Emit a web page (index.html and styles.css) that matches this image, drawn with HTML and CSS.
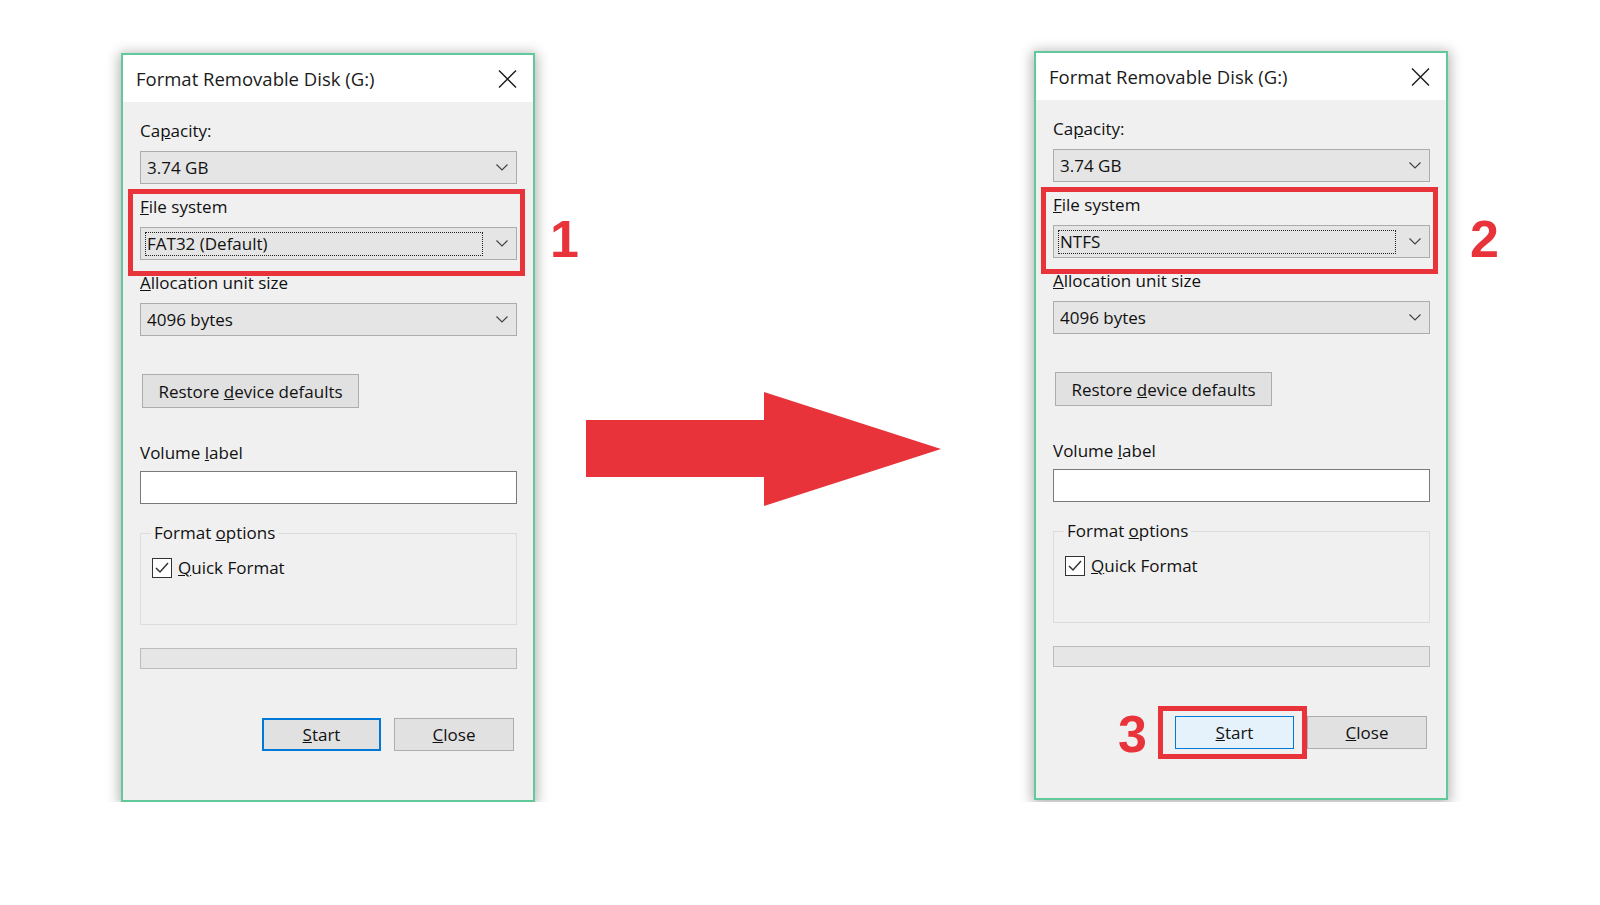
FILE: index.html
```html
<!DOCTYPE html>
<html lang="en">
<head>
    <meta charset="UTF-8">
    <meta name="viewport" content="width=device-width, initial-scale=1.0">
    <title>Format Removable Disk</title>
    <link rel="stylesheet" href="styles.css">
</head>
<body>
    <div class="stage">
        <div class="dialog dialog-before">
            <div class="titlebar">
                <span class="title">Format Removable Disk (G:)</span>
                <svg class="close-x" width="19" height="18" viewBox="0 0 19 18"><path d="M1 0.5 L18 17.5 M18 0.5 L1 17.5" stroke="#1a1a1a" stroke-width="1.4" fill="none"/></svg>
            </div>
            <div class="body">
                <div class="field">
                    <label class="label">Ca<u>p</u>acity:</label>
                    <div class="select"><span class="value">3.74 GB</span><svg class="chev" width="12" height="7" viewBox="0 0 12 7"><polyline points="0.5,0.5 6,6 11.5,0.5" stroke="#444" stroke-width="1.2" fill="none"/></svg></div>
                </div>
                <div class="field">
                    <label class="label"><u>F</u>ile system</label>
                    <div class="select"><span class="value focused">FAT32 (Default)</span><svg class="chev" width="12" height="7" viewBox="0 0 12 7"><polyline points="0.5,0.5 6,6 11.5,0.5" stroke="#444" stroke-width="1.2" fill="none"/></svg></div>
                </div>
                <div class="field">
                    <label class="label"><u>A</u>llocation unit size</label>
                    <div class="select"><span class="value">4096 bytes</span><svg class="chev" width="12" height="7" viewBox="0 0 12 7"><polyline points="0.5,0.5 6,6 11.5,0.5" stroke="#444" stroke-width="1.2" fill="none"/></svg></div>
                </div>

                <div class="btn btn-restore"><span>Restore <u>d</u>evice defaults</span></div>

                <label class="label volume-label">Volume <u>l</u>abel</label>
                <div class="textbox"></div>

                <fieldset class="group">
                    <legend>Format <u>o</u>ptions</legend>
                    <div class="check-row">
                        <span class="checkbox"><svg width="18" height="18" viewBox="0 0 18 18"><polyline points="3,9 7,13 15,4" stroke="#333" stroke-width="1.5" fill="none"/></svg></span>
                        <span><u>Q</u>uick Format</span>
                    </div>
                </fieldset>

                <div class="progress"></div>

                <div class="actions">
                    <div class="btn btn-default"><span><u>S</u>tart</span></div>
                    <div class="btn"><span><u>C</u>lose</span></div>
                </div>
            </div>

            <div class="mark mark-fs"></div>
            <span class="step step-1">1</span>
        </div>

        <svg class="arrow" width="355" height="114" viewBox="0 0 355 114"><path d="M0 28 H178 V0 L355 57 L178 114 V85 H0 Z" fill="#e8333b"/></svg>

        <div class="dialog dialog-after">
            <div class="titlebar">
                <span class="title">Format Removable Disk (G:)</span>
                <svg class="close-x" width="19" height="18" viewBox="0 0 19 18"><path d="M1 0.5 L18 17.5 M18 0.5 L1 17.5" stroke="#1a1a1a" stroke-width="1.4" fill="none"/></svg>
            </div>
            <div class="body">
                <div class="field">
                    <label class="label">Ca<u>p</u>acity:</label>
                    <div class="select"><span class="value">3.74 GB</span><svg class="chev" width="12" height="7" viewBox="0 0 12 7"><polyline points="0.5,0.5 6,6 11.5,0.5" stroke="#444" stroke-width="1.2" fill="none"/></svg></div>
                </div>
                <div class="field">
                    <label class="label"><u>F</u>ile system</label>
                    <div class="select"><span class="value focused">NTFS</span><svg class="chev" width="12" height="7" viewBox="0 0 12 7"><polyline points="0.5,0.5 6,6 11.5,0.5" stroke="#444" stroke-width="1.2" fill="none"/></svg></div>
                </div>
                <div class="field">
                    <label class="label"><u>A</u>llocation unit size</label>
                    <div class="select"><span class="value">4096 bytes</span><svg class="chev" width="12" height="7" viewBox="0 0 12 7"><polyline points="0.5,0.5 6,6 11.5,0.5" stroke="#444" stroke-width="1.2" fill="none"/></svg></div>
                </div>

                <div class="btn btn-restore"><span>Restore <u>d</u>evice defaults</span></div>

                <label class="label volume-label">Volume <u>l</u>abel</label>
                <div class="textbox"></div>

                <fieldset class="group">
                    <legend>Format <u>o</u>ptions</legend>
                    <div class="check-row">
                        <span class="checkbox"><svg width="18" height="18" viewBox="0 0 18 18"><polyline points="3,9 7,13 15,4" stroke="#333" stroke-width="1.5" fill="none"/></svg></span>
                        <span><u>Q</u>uick Format</span>
                    </div>
                </fieldset>

                <div class="progress"></div>

                <div class="actions">
                    <div class="btn btn-hover"><span><u>S</u>tart</span></div>
                    <div class="btn"><span><u>C</u>lose</span></div>
                </div>
            </div>

            <div class="mark mark-fs"></div>
            <div class="mark mark-start"></div>
            <span class="step step-2">2</span>
            <span class="step step-3">3</span>
        </div>
    </div>
</body>
</html>
```

FILE: styles.css
```css
* {
    box-sizing: border-box;
}
body {
    margin: 0;
    background-color: #fff;
    font-family: "Open Sans", "Noto Sans", sans-serif;
    color: #111;
}
.stage {
    display: flex;
    align-items: flex-start;
    padding-left: 121px;
}
.dialog {
    position: relative;
    width: 414px;
    background-color: #f0f0f0;
    border: 2px solid #62c99c;
    box-shadow: 0 2px 12px 2px rgba(0, 0, 0, 0.3);
}
.dialog-before {
    margin-top: 53px;
}
.dialog-after {
    margin-top: 51px;
}
.arrow {
    margin: 392px 93px 0 51px;
    flex-shrink: 0;
}
.titlebar {
    height: 47px;
    background-color: #fff;
    display: flex;
    align-items: center;
    justify-content: space-between;
    padding: 0 16px 0 13px;
}
.title {
    font-size: 18.5px;
    color: #1a1a1a;
}
.body {
    display: flex;
    flex-direction: column;
    padding: 0 16px 49px 17px;
    font-size: 17px;
}
.field {
    margin-top: 12px;
}
.field:first-child {
    margin-top: 18px;
}
.label {
    display: block;
    line-height: 22px;
    margin-bottom: 9px;
}
.select {
    height: 33px;
    display: flex;
    align-items: center;
    padding: 0 8px 0 4px;
    background-color: #e5e5e5;
    border: 1px solid #acacac;
}
.value {
    flex: 1;
    height: 24px;
    line-height: 22px;
    padding: 0 1px;
    border: 1px dotted transparent;
    margin-right: 13px;
}
.value.focused {
    border-color: #222;
}
.btn {
    height: 33px;
    width: 120px;
    display: flex;
    align-items: center;
    justify-content: center;
    background-color: #e1e1e1;
    border: 1px solid #adadad;
}
.btn-restore {
    width: 217px;
    height: 34px;
    margin: 38px 0 0 2px;
}
.btn-default {
    width: 119px;
    border: 2px solid #0078d7;
}
.btn-hover {
    width: 119px;
    background-color: #e5f1fb;
    border-color: #0078d7;
}
.volume-label {
    margin-top: 34px;
    margin-bottom: 7px;
}
.textbox {
    height: 33px;
    background-color: #fff;
    border: 1px solid #7a7a7a;
}
.group {
    margin: 18px 0 0;
    padding: 14px 10px 46px;
    border: 1px solid #dcdcdc;
    min-width: 0;
}
.group legend {
    padding: 0 3px;
    line-height: 22px;
}
.check-row {
    display: flex;
    align-items: center;
    gap: 6px;
    margin-left: 1px;
    line-height: 20px;
}
.checkbox {
    width: 20px;
    height: 20px;
    border: 1px solid #333;
    background-color: #fff;
    display: flex;
    align-items: center;
    justify-content: center;
}
.progress {
    margin-top: 23px;
    height: 21px;
    background-color: #e6e6e6;
    border: 1px solid #bcbcbc;
}
.actions {
    margin-top: 49px;
    padding-right: 3px;
    display: flex;
    justify-content: flex-end;
    gap: 13px;
}

/* annotations drawn over the dialogs */
.mark {
    position: absolute;
    border: 5px solid #e8333b;
}
.mark-fs {
    left: 5px;
    top: 134px;
    width: 397px;
    height: 87px;
}
.mark-start {
    left: 122px;
    top: 653px;
    width: 149px;
    height: 53px;
}
.step {
    position: absolute;
    font-family: "Liberation Sans", Arial, sans-serif;
    font-weight: bold;
    font-size: 52px;
    line-height: 1;
    color: #e8333b;
}
.step-1 {
    left: 427px;
    top: 158px;
}
.step-2 {
    left: 434px;
    top: 160px;
}
.step-3 {
    left: 82px;
    top: 655px;
}
```
